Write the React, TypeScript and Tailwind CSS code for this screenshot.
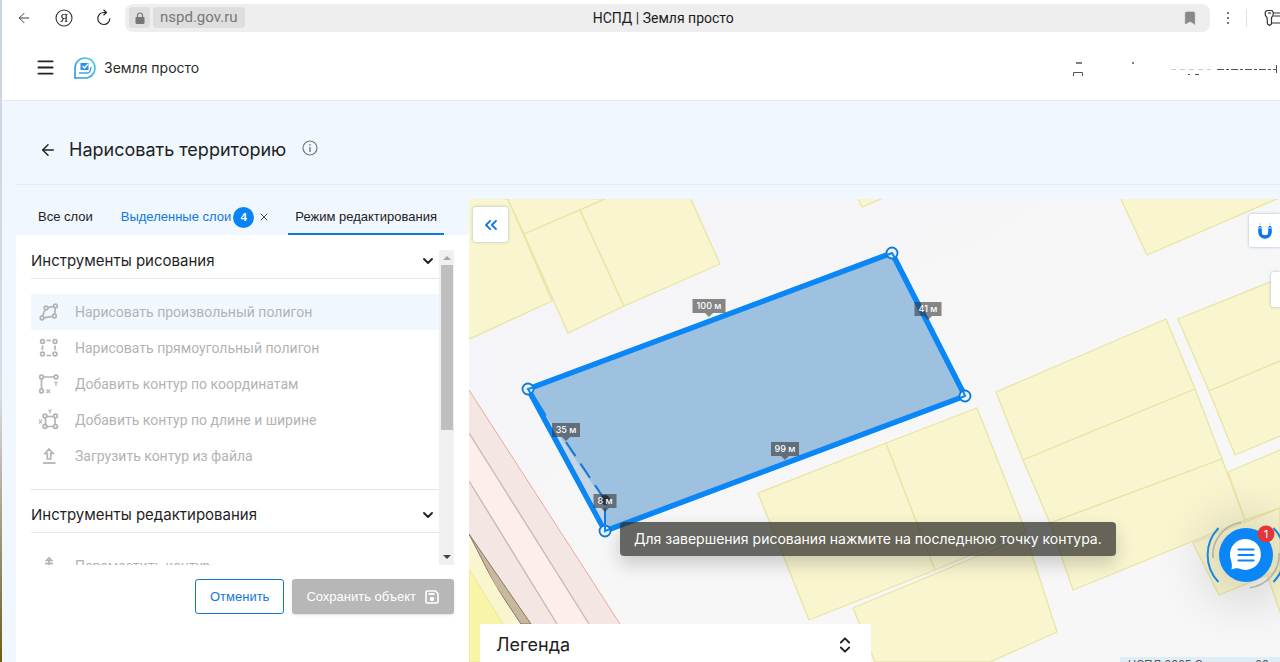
import React from "react";
import { ArrowLeft, Bookmark, ChevronDown, ChevronsLeft, ChevronsUpDown, Menu, X } from "lucide-react";

const parcels = [
  "465,195 508,199 552,301 465,341",
  "506,195 605,199 524,234",
  "524,234 580,210 624,306 568,333",
  "580,210 614,195 689,195 720,264 624,306",
  "856,195 862,207 890,195",
  "1119,195 1147,255 1286,195",
  "996,392 1166,319 1195,389 1023,460",
  "1023,460 1195,389 1222,459 1050,523",
  "1050,523 1222,459 1245,520 1073,590",
  "1178,319 1280,278 1700,110 1700,190 1280,361 1209,391",
  "1209,391 1280,361 1700,190 1700,260 1280,436 1235,455",
  "1228,472 1280,450 1700,280 1700,340 1280,508 1245,520",
  "1193,543 1280,508 1280,570 1219,595",
  "1267,575 1290,565 1300,670 1283,620",
  "758,493 886,443 935,570 809,620",
  "886,443 977,408 1026,532 935,570",
  "853,608 1026,536 1057,632 990,662 875,662",
];

const vertices: [number, number][] = [
  [528, 389],
  [892, 253],
  [965, 396],
  [605, 531],
];

const measures = [
  { x: 709, y: 306, w: 33, text: "100 м" },
  { x: 928, y: 309, w: 27, text: "41 м" },
  { x: 566, y: 430, w: 28, text: "35 м" },
  { x: 785, y: 449, w: 28, text: "99 м" },
  { x: 605, y: 501, w: 23, text: "8 м" },
];

function MapCanvas() {
  return (
    <svg className="absolute inset-0 h-full w-full" aria-label="Карта">
      <defs>
        <linearGradient id="ground" x1="0" y1="0" x2="1" y2="1">
          <stop offset="0" stopColor="#f4f3fb" />
          <stop offset="0.35" stopColor="#f6f6f7" />
          <stop offset="1" stopColor="#f7f7f7" />
        </linearGradient>
      </defs>
      <rect width="100%" height="100%" fill="url(#ground)" />
      <g transform="translate(-469 -199)">
        <polygon points="469,390 620,624 645,662 469,662" fill="#f4e6e3" />
        <polygon points="469,433 589,624 612,662 580,662 557,624 469,481" fill="#fdeeeb" />
        <polygon points="469,533 531,624 531,662 469,662" fill="#f8f7f1" />
        <polygon points="469,534 531,624 521,624 495,585" fill="#c9b8a0" stroke="#8d7756" strokeWidth="1" />
        <polygon points="469,540 518,624 503,624 469,569" fill="#f8f5cf" />
        <polygon points="469,569 503,624 503,662 469,662" fill="#f8f5a8" stroke="#ebe79a" />
        <path d="M469 390 620 624" stroke="#eaa9a0" fill="none" />
        <path d="M469 433 589 624M469 481 557 624" stroke="#c9b9b8" strokeWidth="1.4" fill="none" />
        {parcels.map((points) => (
          <polygon key={points} points={points} fill="#f8f5cf" stroke="#e9e5a4" strokeWidth="1.3" />
        ))}
        <polygon
          points="528,389 892,253 965,396 605,531"
          fill="#9fc1e0"
          stroke="#0a86f5"
          strokeWidth="5.5"
          strokeLinejoin="round"
        />
        <polygon points="545,414 603,500 605,522 604,524" fill="#c4d5e6" />
        <path d="M530 392 545 416" stroke="#0a86f5" strokeWidth="4" />
        <path d="M566 442 605 500V531" stroke="#1279d8" strokeWidth="2" strokeDasharray="17 9" fill="none" />
        <circle cx="605" cy="500" r="5" fill="#12304f" />
        {vertices.map(([x, y]) => (
          <circle key={x} cx={x} cy={y} r="5.5" fill="#e9f2fb" stroke="#1279d0" strokeWidth="1.8" />
        ))}
        <g stroke="#0a86f5" strokeWidth="2" fill="none">
          <path d="M534 387 528 389 531 394" />
          <path d="M887 255 892 253 895 258" />
          <path d="M963 391 965 396 960 398" />
          <path d="M605 524V531L610 529" />
        </g>
        {measures.map((m) => (
          <g key={m.text}>
            <path
              d={`M${m.x - m.w / 2} ${m.y - 7}h${m.w}v14h${-(m.w / 2 - 4)}l-4 4l-4 -4h${-(m.w / 2 - 4)}z`}
              fill="#333"
              fillOpacity="0.58"
            />
            <text
              x={m.x}
              y={m.y + 3}
              textAnchor="middle"
              fill="#fff"
              className="font-['Inter',sans-serif] text-[9px] font-medium"
            >
              {m.text}
            </text>
          </g>
        ))}
      </g>
    </svg>
  );
}

const iconProps = {
  width: 20,
  height: 20,
  viewBox: "0 0 20 20",
  fill: "none",
  stroke: "#b3b3b3",
  strokeWidth: 1.7,
  "aria-hidden": true,
};

function FreePolygonIcon() {
  return (
    <svg {...iconProps}>
      <circle cx="3" cy="16" r="1.8" />
      <circle cx="7" cy="6" r="1.8" />
      <circle cx="16.500" cy="4" r="1.8" />
      <circle cx="15.500" cy="14" r="1.8" />
      <path d="M3.500 14 6 7.800M9 5.600 14.500 4.400M16.300 6 15.700 12M13.600 14.400 5 15.800" />
    </svg>
  );
}
function RectPolygonIcon() {
  return (
    <svg {...iconProps}>
      <circle cx="3.500" cy="3.500" r="1.900" />
      <circle cx="16" cy="3.500" r="1.900" />
      <circle cx="3.500" cy="16" r="1.900" />
      <circle cx="16" cy="16" r="1.900" />
      <path d="M7.500 2.500h4.500M7.500 17.500h4.500M3.500 7.500v4.500M16 7.500v4.500" />
    </svg>
  );
}
function CoordinatesIcon() {
  return (
    <svg {...iconProps}>
      <circle cx="2.500" cy="3" r="1.900" />
      <circle cx="17" cy="3" r="1.900" />
      <circle cx="2.500" cy="17" r="1.900" />
      <path d="M4.500 3H15M2.500 5v10" />
      <path d="M7.500 15.500l3.500 3.500M11 15.500l-3.500 3.500M15.500 7.500 17 9.500 18.500 7.500M17 9.500v2.500" strokeWidth="1.200" />
    </svg>
  );
}
function SizeIcon() {
  return (
    <svg {...iconProps} className="overflow-visible">
      <circle cx="6" cy="6" r="1.900" />
      <circle cx="16.500" cy="6" r="1.900" />
      <circle cx="6" cy="16.500" r="1.900" />
      <circle cx="16.500" cy="16.500" r="1.900" />
      <path d="M8 6.500h6.500M8 16.500h6.500M6.500 8v6.500M16 8v6.500" />
      <path d="M0 9.500l3 4M3 9.500l-3 4M9.500 -.5 11 1.500 12.500 -.5M11 1.500v2" strokeWidth="1.200" />
    </svg>
  );
}
function UploadIcon() {
  return (
    <svg {...iconProps}>
      <path d="M10 3 6 7.500h2.300v5.500h3.400V7.500H14z" />
      <path d="M4 17h12.500" strokeWidth="1.800" />
    </svg>
  );
}
function MoveIcon() {
  return (
    <svg {...iconProps}>
      <path d="M7.500 4.500 10 2l2.500 2.500zM10 5v12M3 10h14" />
      <path d="M6 7.500h8" />
    </svg>
  );
}

const drawTools = [
  { label: "Нарисовать произвольный полигон", Icon: FreePolygonIcon, active: true },
  { label: "Нарисовать прямоугольный полигон", Icon: RectPolygonIcon, active: false },
  { label: "Добавить контур по координатам", Icon: CoordinatesIcon, active: false },
  { label: "Добавить контур по длине и ширине", Icon: SizeIcon, active: false },
  { label: "Загрузить контур из файла", Icon: UploadIcon, active: false },
];
const editTools = [{ label: "Переместить контур", Icon: MoveIcon, active: false }];

function ToolSection({ title, tools }: { title: string; tools: typeof drawTools }) {
  return (
    <section className="mb-[5px] border-b border-[#e4e4e4]">
      <button className="flex h-[38px] w-full items-center justify-between border-b border-[#e8e8e8] pr-[3px] pt-[3px] text-left text-[15px] text-[#1f1f1f]">
        {title}
        <ChevronDown size={16} strokeWidth={2.8} aria-hidden />
      </button>
      <ul className="py-[15px] font-['Roboto',sans-serif]">
        {tools.map(({ label, Icon, active }) => (
          <li key={label}>
            <button
              disabled
              className={`flex h-9 w-full items-center gap-4 pl-2 text-left text-sm text-[#b3b3b3] ${active ? "bg-[#f0f7ff]" : ""}`}
            >
              <Icon />
              {label}
            </button>
          </li>
        ))}
      </ul>
    </section>
  );
}

function BrowserBar() {
  return (
    <div className="flex h-[35px] shrink-0 items-center pl-[14px] font-['Roboto',sans-serif] text-[#222]">
      <button aria-label="Назад" className="mr-[23px]">
        <ArrowLeft size={16} strokeWidth={1.3} />
      </button>
      <button aria-label="Яндекс" className="mr-[23px]">
        <svg width="18" height="18" viewBox="0 0 18 18" fill="none">
          <circle cx="9" cy="9" r="8" stroke="#333" strokeWidth="1.100" />
          <text x="9" y="13" textAnchor="middle" fill="#222" className="font-['Liberation_Serif',serif] text-[12px]">
            Я
          </text>
        </svg>
      </button>
      <button aria-label="Обновить" className="mr-[13px]">
        <svg width="16" height="18" viewBox="0 0 16 18" fill="none" stroke="#222" strokeWidth="1.200">
          <path d="M13.800 9.500A6 6 0 1 1 8 3.500h2.500M7.500 .8l3 2.700-3 2.700" />
        </svg>
      </button>
      <div className="flex h-7 flex-1 items-center gap-[3px] rounded-lg bg-[#eeeeee] pl-1 pr-3">
        <span className="flex h-[21px] w-[21px] items-center justify-center rounded bg-[#dedede]">
          <svg width="10" height="12" viewBox="0 0 10 12">
            <rect x="0.500" y="5" width="9" height="7" rx="1" fill="#777" />
            <path d="M2.500 6V3.500a2.500 2.500 0 0 1 5 0V6" fill="none" stroke="#777" strokeWidth="1.200" />
          </svg>
        </span>
        <span className="rounded bg-[#dedede] px-[7px] text-[15px] leading-[21px] text-[#777]">nspd.gov.ru</span>
        <span className="flex-1 pr-[100px] text-center text-sm text-[#1c1c1c]">НСПД | Земля просто</span>
        <Bookmark size={16} fill="#888" stroke="#888" strokeWidth={1} aria-hidden />
      </div>
      <button aria-label="Меню" className="flex w-9 justify-center">
        <svg width="4" height="14" fill="#444">
          <circle cx="2" cy="2" r="1" />
          <circle cx="2" cy="7" r="1" />
          <circle cx="2" cy="12" r="1" />
        </svg>
      </button>
      <span className="h-[18px] w-px bg-[#e2e2e2]" />
      <button aria-label="Пароли" className="ml-[17px]">
        <svg width="16" height="18" viewBox="0 0 16 18" fill="none" stroke="#333" strokeWidth="1.200">
          <path d="M3 8.500C1 7 .8 5 1.500 2.800L3 1.500h5l1.200 2C9.600 5.500 9 7.300 7.500 8.500V15L5.500 16.500 3.500 15z" />
          <path d="M4 4h3" />
          <path d="M9.500 4H16M9.500 7H16M7.500 14H16" />
        </svg>
      </button>
    </div>
  );
}

function AppHeader() {
  return (
    <header className="flex h-[66px] shrink-0 items-center border-b border-[#e4eaf1] pl-[33px]">
      <button aria-label="Открыть меню" className="mr-[18px]">
        <Menu size={21} strokeWidth={2.2} className="text-[#222]" />
      </button>
      <svg width="22" height="22" viewBox="0 0 22 22" fill="none" className="mr-2" aria-hidden>
        <defs>
          <linearGradient id="brand" x1="1" y1="0" x2="0" y2="1">
            <stop offset="0" stopColor="#48d5dc" />
            <stop offset="1" stopColor="#2f8fe8" />
          </linearGradient>
        </defs>
        <path d="M1 21V11A10 10 0 1 1 11 21z" stroke="url(#brand)" strokeWidth="1.600" />
        <rect x="6.500" y="6" width="8" height="7" fill="#2a93e6" />
        <path d="M8.500 9l2 2 3.500-4" stroke="#fff" strokeWidth="1.300" />
        <path d="M5 16h8.500c2 0 3-2 3.500-6" stroke="#3aa4e8" strokeWidth="1.400" />
      </svg>
      <span className="flex-1 text-sm text-[#2b2b2b]">Земля просто</span>
      <svg width="207" height="16" viewBox="0 0 207 16" stroke="#555" aria-hidden>
        <path d="M3 3h6M59 3h2" strokeWidth="1.500" />
        <path d="M.500 16v-3.500h9V16" fill="none" />
        <path d="M98 9.500h40" strokeDasharray="5 4" stroke="#ccc" />
        <path d="M144 9.500h60" strokeDasharray="7 2 3 2" />
        <path d="M203.500 5v8M115 14.500h2M122 14.500h4" />
      </svg>
    </header>
  );
}

function SidePanel() {
  return (
    <aside className="flex w-[453px] shrink-0 flex-col">
      <nav className="flex h-9 items-stretch pl-[22px] pr-[25px] font-['Liberation_Sans',sans-serif] text-[13px] text-[#222]">
        <button className="mr-7">Все слои</button>
        <button className="flex items-center gap-[2px] text-[#1177e0]">
          Выделенные слои
          <span className="flex h-[21px] w-[21px] items-center justify-center rounded-full bg-[#0a84f5] text-[11px] font-bold text-white">
            4
          </span>
        </button>
        <button aria-label="Снять выделение" className="ml-1">
          <X size={12} strokeWidth={1.6} />
        </button>
        <button className="ml-auto border-b-2 border-[#1177d8] px-[7px] pt-[2px]">Режим редактирования</button>
      </nav>
      <div className="flex min-h-0 flex-1 flex-col bg-white px-[15px]">
        <div className="mt-[6px] flex h-[324px] overflow-hidden">
          <div className="flex-1">
            <ToolSection title="Инструменты рисования" tools={drawTools} />
            <ToolSection title="Инструменты редактирования" tools={editTools} />
          </div>
          <div className="mt-[9px] flex w-[15px] flex-col items-center justify-between bg-[#f0f0f0]" aria-hidden>
            <div className="flex w-full flex-col items-center">
              <svg width="8" height="15" fill="#a3a3a3">
                <path d="M0 10 4 6l4 4z" />
              </svg>
              <div className="h-[165px] w-3 bg-[#bfbfbf]" />
            </div>
            <svg width="8" height="15" fill="#444">
              <path d="M0 5l4 4 4-4z" />
            </svg>
          </div>
        </div>
        <div className="mt-[14px] flex justify-end gap-2 font-['Liberation_Sans',sans-serif] text-[13px]">
          <button className="h-[35px] rounded-[3px] border border-[#1177d8] px-[14px] text-[#1177e0]">Отменить</button>
          <button
            disabled
            className="flex h-[35px] items-center gap-2 rounded-[3px] bg-[#b7b7b7] px-[14px] text-white shadow-sm"
          >
            Сохранить объект
            <svg width="16" height="16" viewBox="0 0 16 16" fill="none" stroke="#fff" strokeWidth="1.600" aria-hidden>
              <path d="M3 2h8.500L14 4.500V13a1 1 0 0 1-1 1H3a1 1 0 0 1-1-1V3a1 1 0 0 1 1-1z" />
              <path d="M4.500 5h6" strokeWidth="2" />
              <circle cx="8" cy="10" r="1.400" fill="#fff" />
            </svg>
          </button>
        </div>
      </div>
    </aside>
  );
}

function ChatButton() {
  return (
    <button
      aria-label="Чат, 1 новое сообщение"
      className="absolute right-[-6px] top-[316px] flex h-20 w-20 items-center justify-center"
    >
      <span className="h-[50px] w-[50px] rounded-full shadow-[0_4px_50px_20px_rgba(0,0,0,0.13)]" />
      <svg width="80" height="80" viewBox="0 0 80 80" fill="none" className="absolute inset-0">
        <path d="M12.500 13A39 39 0 0 0 12.500 67M67.500 13A39 39 0 0 1 67.500 67" stroke="#1a86e0" strokeWidth="2" />
        <path d="M7 43A33 33 0 0 1 35 7.500M73 38A33 33 0 0 1 44 72.700" stroke="#b5b1a2" strokeWidth="1.600" />
        <circle cx="40" cy="40" r="27" fill="#0a86f7" />
        <path d="M25.500 54.500C26.300 51 25.800 48.500 25 45A15.500 15.500 0 1 1 33 53.500C31 53 29 53 25.500 54.500z" fill="#fff" />
        <path d="M32.500 34.500h15M32.500 40h15M32.500 45.500h15" stroke="#0a86f7" strokeWidth="2.200" strokeLinecap="round" />
        <circle cx="60" cy="19" r="8.500" fill="#e53538" />
        <text x="60" y="23" textAnchor="middle" fill="#fff" className="font-['Inter',sans-serif] text-[11px]">
          1
        </text>
      </svg>
    </button>
  );
}

function MapPane() {
  return (
    <div className="relative min-w-0 flex-1 overflow-hidden">
      <MapCanvas />
      <button
        aria-label="Свернуть панель"
        className="absolute left-1 top-2 flex h-[35px] w-[35px] items-center justify-center rounded-[3px] bg-white text-[#1177e0] shadow-[0_0_3px_rgba(60,130,190,0.5)]"
      >
        <ChevronsLeft size={20} strokeWidth={2.2} />
      </button>
      <button
        aria-label="Привязка"
        className="absolute right-0 top-[15px] flex h-[33px] w-[31px] items-center justify-center rounded-l-[3px] bg-white shadow-[0_0_3px_rgba(60,130,190,0.5)]"
      >
        <svg width="16" height="18" viewBox="0 0 16 18" fill="none">
          <path d="M3 7v3a5 5 0 0 0 10 0V7" stroke="#0a78e8" strokeWidth="3.600" />
          <path d="M2 4.500h2v2.500H2zM12 4.500h2v2.500h-2z" stroke="#0a78e8" strokeWidth="1" fill="#fff" />
          <path d="M3 1v2.500M13 1v2.500" stroke="#a9cdf0" />
        </svg>
      </button>
      <button
        aria-label="Слои карты"
        className="absolute right-0 top-[73px] h-[35px] w-[9px] rounded-l-[3px] bg-white shadow-[0_0_3px_rgba(60,130,190,0.5)]"
      />
      <div
        role="tooltip"
        className="absolute left-[151px] top-[323px] whitespace-nowrap rounded bg-[#2c2c27]/72 px-[14px] text-sm leading-[34px] text-white shadow-[0_8px_18px_rgba(0,0,0,0.18)]"
      >
        Для завершения рисования нажмите на последнюю точку контура.
      </div>
      <ChatButton />
      <button className="absolute bottom-0 left-[11px] flex h-[38px] w-[391px] items-center justify-between bg-white px-4 pt-[3px] text-lg text-[#222]">
        Легенда
        <ChevronsUpDown size={20} strokeWidth={2.2} aria-hidden />
      </button>
      <div className="absolute bottom-0 right-0 flex h-[5px] w-40 justify-between overflow-hidden bg-[#deedf8] pl-2 pr-[11px] text-[11px] leading-[14px] text-[#555]">
        <span>НСПД 2025 С</span>
        <span>20</span>
      </div>
    </div>
  );
}

export default function App() {
  return (
    <div className="flex h-screen overflow-hidden bg-white font-['Inter',sans-serif]">
      <div className="w-[2px] shrink-0 bg-gradient-to-b from-[#c9d3e6] via-[#dcdce2] via-60% to-[#6d5c10]" />
      <div className="flex min-w-0 flex-1 flex-col">
        <BrowserBar />
        <AppHeader />
        <main className="flex min-h-0 flex-1 flex-col bg-[#f0f7ff] pl-[14px]">
          <div className="flex h-[84px] shrink-0 items-center border-b border-[#e6ecf3] pl-[23px] pt-[14px]">
            <button aria-label="Назад" className="mr-3 text-[#222]">
              <ArrowLeft size={18} strokeWidth={2} />
            </button>
            <h1 className="text-lg text-[#222]">Нарисовать территорию</h1>
            <svg width="16" height="16" viewBox="0 0 16 16" fill="none" stroke="#777" className="mb-1 ml-4" aria-hidden>
              <circle cx="8" cy="8" r="7" strokeWidth="1.200" />
              <path d="M8 7v5M8 4v1.500" strokeWidth="1.400" />
            </svg>
          </div>
          <div className="flex min-h-0 flex-1 pt-[14px]">
            <SidePanel />
            <MapPane />
          </div>
        </main>
      </div>
    </div>
  );
}
